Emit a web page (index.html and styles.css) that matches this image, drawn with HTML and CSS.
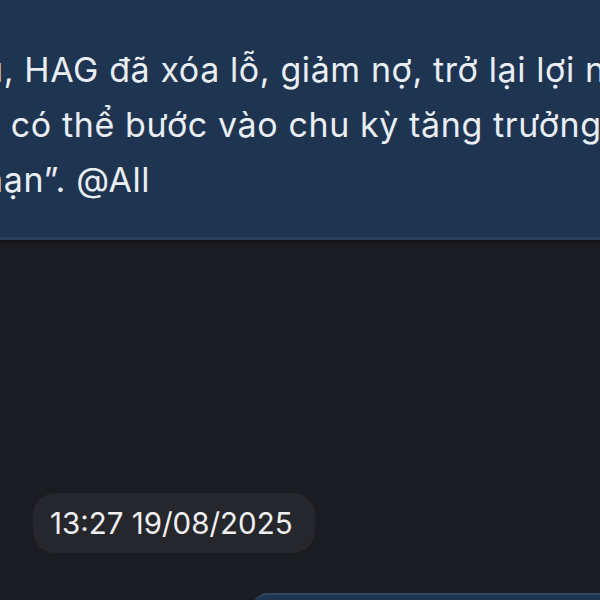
FILE: index.html
```html
<!DOCTYPE html>
<html lang="vi">
<head>
<meta charset="utf-8">
<title>Chat</title>
<link rel="stylesheet" href="styles.css">
</head>
<body>
<main class="chat">
  <div class="msg">
    <p class="msg-text">u, HAG đã xóa lỗ, giảm nợ, trở lại lợi nhuận<br>lì có thể bước vào chu kỳ tăng trưởng dài<br>hạn”. @All</p>
  </div>
  <div class="stamp-row">
    <span class="stamp">13:27 19/08/2025</span>
  </div>
  <div class="next-row">
    <div class="next"></div>
  </div>
</main>
</body>
</html>
```
FILE: styles.css
```css
html, body {
  margin: 0;
  padding: 0;
  background: #1b1c21;
}
.chat {
  width: 600px;
  height: 600px;
  overflow: hidden;
  display: flex;
  flex-direction: column;
  font-family: Inter, "Noto Sans", sans-serif;
}
.msg {
  background: #1f3451;
  margin-left: -40px;
  width: 700px;
  flex: 0 0 auto;
  box-sizing: border-box;
  padding: 42px 0 30px 23px;
  height: 240px;
  overflow: hidden;
  border-bottom: 3px solid #2b405d;
  box-shadow: 0 2px 2px #121318;
}
.msg-text {
  margin: 0;
  color: #e9eef4;
  font-size: 34px;
  letter-spacing: 0.6px;
  line-height: 55px;
  white-space: nowrap;
}
.stamp-row {
  display: flex;
  margin-top: 253px;
  padding-left: 33px;
}
.stamp {
  background: #26272c;
  color: #f0f0f2;
  font-size: 29.5px;
  height: 60px;
  line-height: 60px;
  padding: 0 16px 0 17px;
  border-radius: 22px;
  box-sizing: border-box;
  width: 282px;
  white-space: nowrap;
}
.next-row {
  margin-top: 40px;
  padding-left: 252px;
}
.next {
  background: #1f3451;
  width: 400px;
  height: 40px;
  border-radius: 16px 0 0 0;
  border-top: 2px solid #2f4766;
}
```
